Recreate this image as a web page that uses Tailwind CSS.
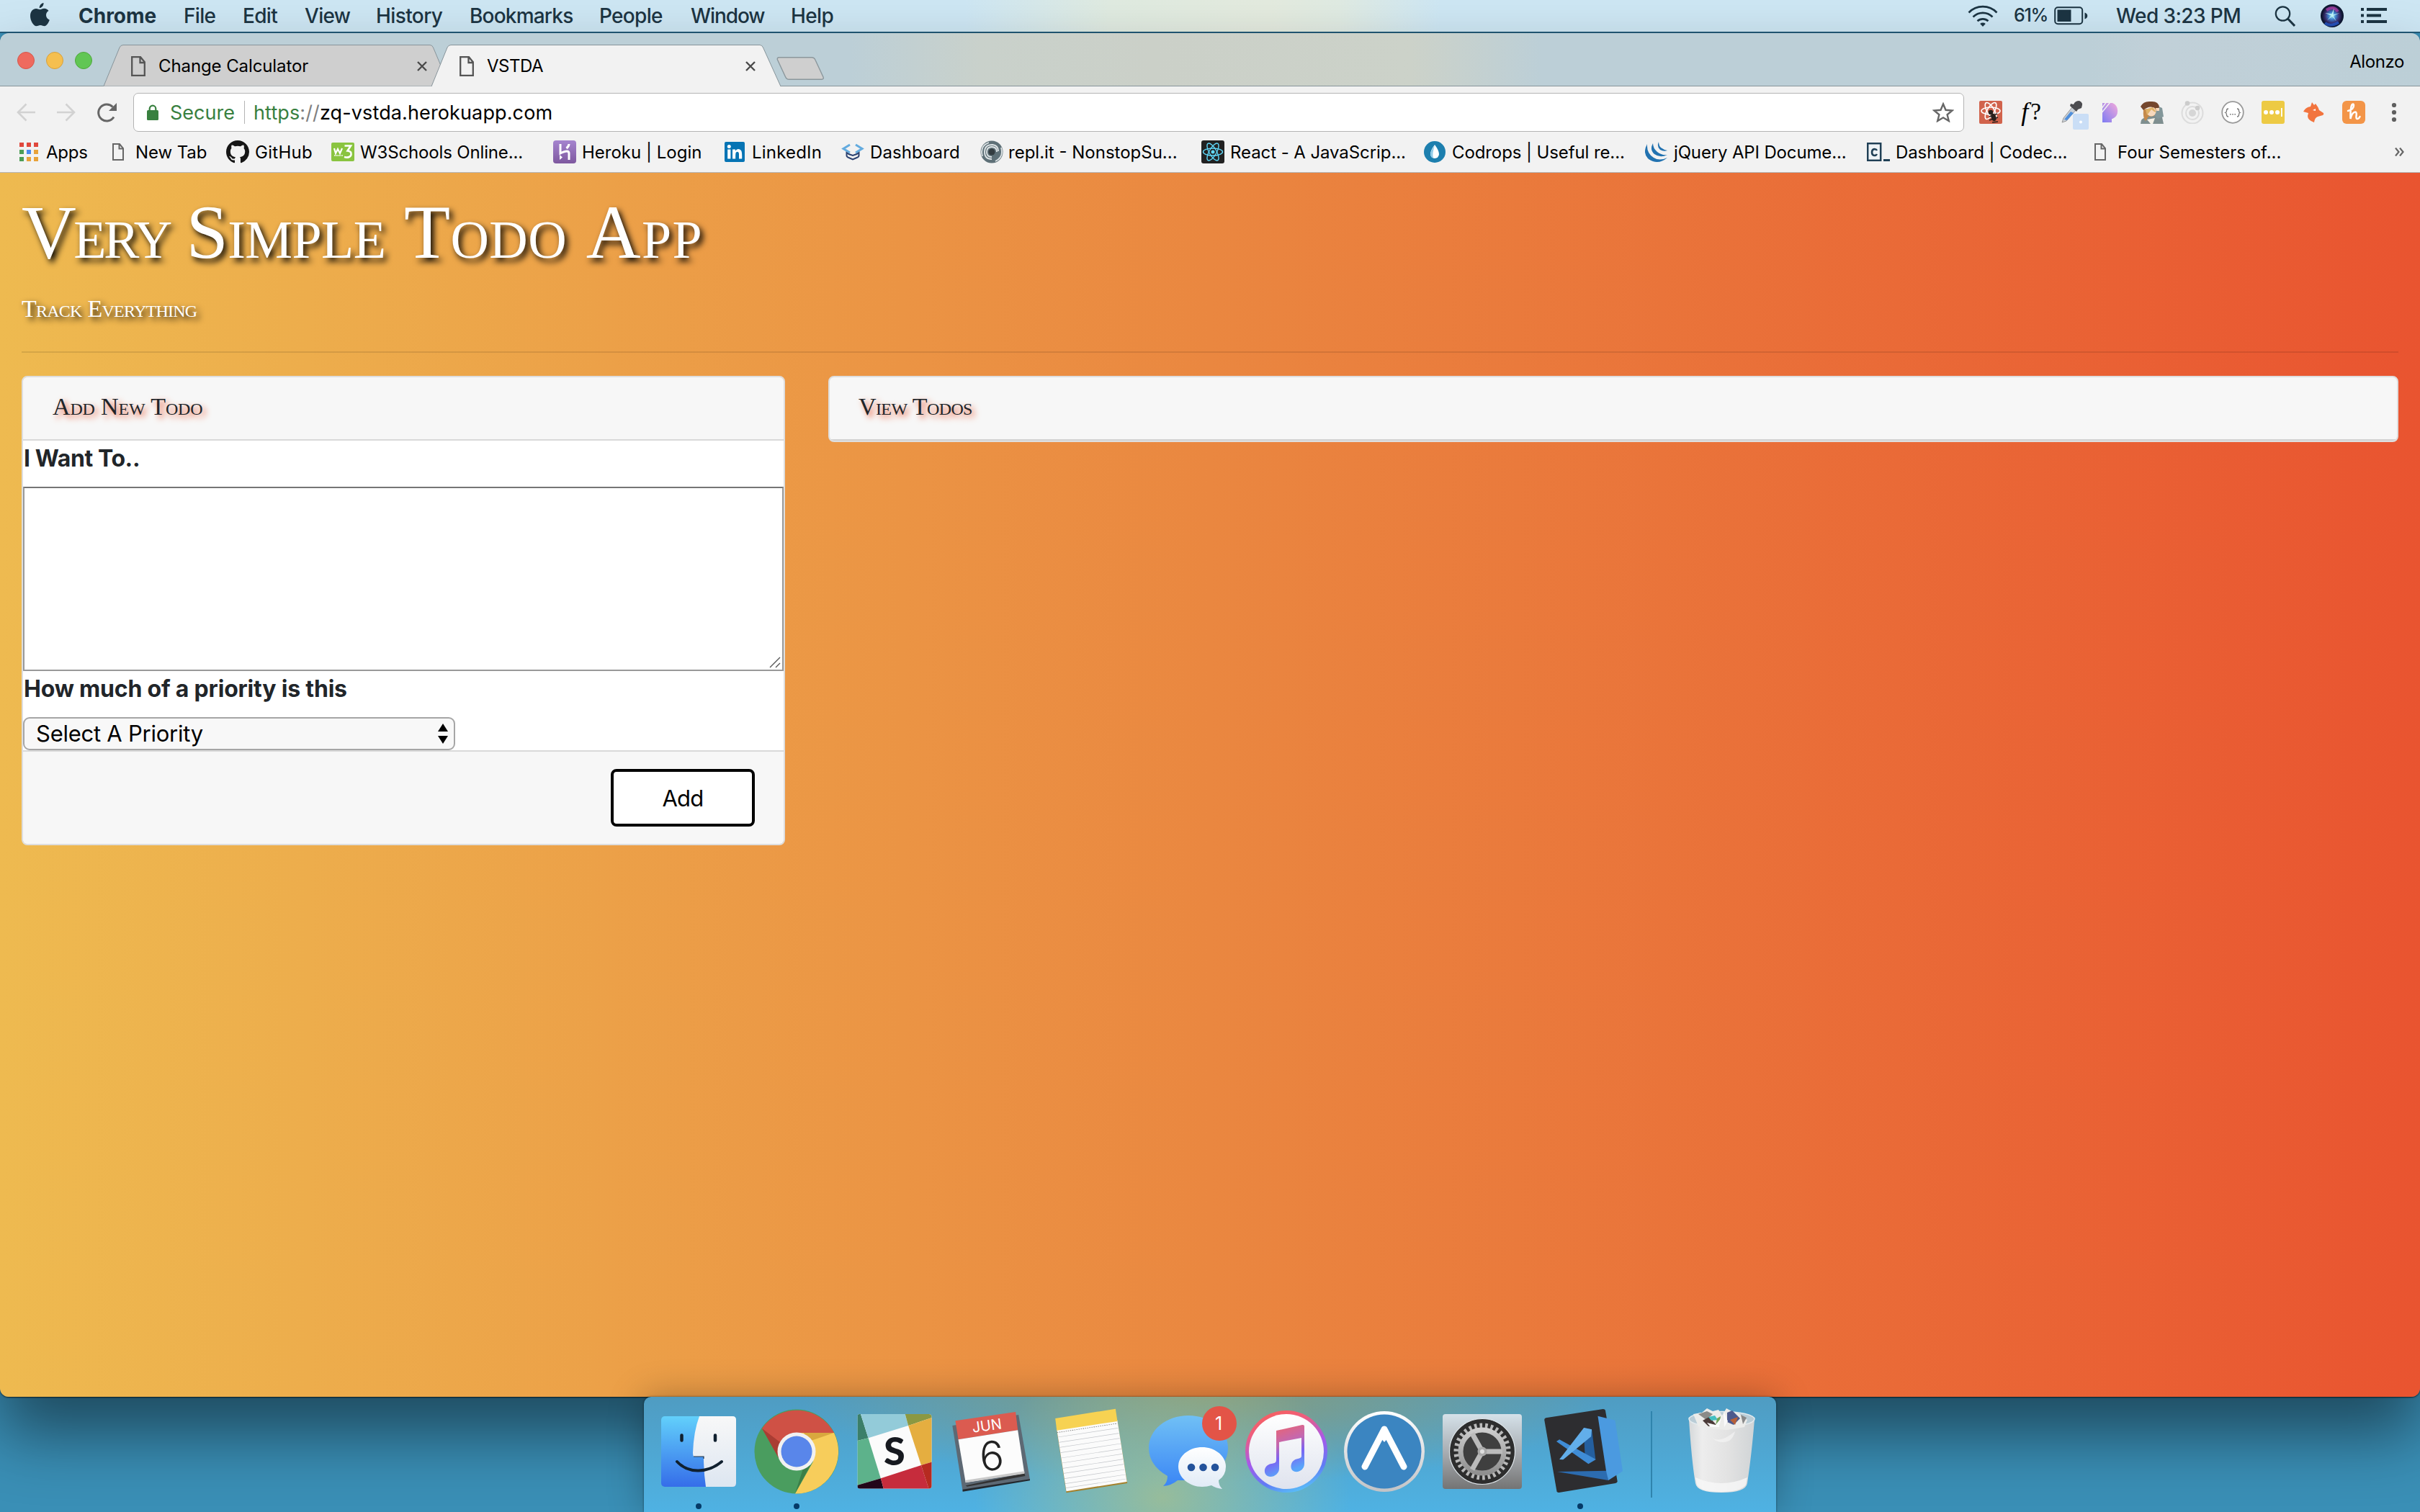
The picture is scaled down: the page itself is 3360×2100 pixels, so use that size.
<!DOCTYPE html>
<html lang="en">
<head>
<meta charset="utf-8">
<title>VSTDA</title>
<script src="https://cdn.jsdelivr.net/npm/@tailwindcss/browser@4"></script>
</head>
<body class="w-[3360px] h-[2100px] overflow-hidden bg-[#3a8fb6] font-['Inter',sans-serif] text-black relative whitespace-nowrap">

<!-- Menu bar -->
<header class="h-[46px] flex items-center border-b-2 border-[#225a78] bg-[linear-gradient(90deg,#cde6f3_0,#cde6f3_1340px,#dfeae0_1540px,#e3eade_1760px,#dfeae2_1860px,#cde6f3_2000px,#cde6f3_3360px)] text-[28px] font-medium text-[#1b3341]">
  <svg class="ml-[42px] mr-[40px] w-[27px] h-[33px] -mt-1 shrink-0" viewBox="0 0 27 33" fill="#1b3341"><path d="M18.500 0c.3 3.800-2.600 7-5.700 7.200C12.400 3.600 15.500.3 18.500 0zM13.600 9.300c1.500 0 3.200-1.500 5.800-1.500 2.600 0 4.900 1.300 6.100 3.300-5.300 3.100-4.300 10.400 1.300 12.700-1.500 4-4.100 8.400-7.100 8.400-2.200 0-2.900-1.300-5.600-1.300-2.700 0-3.600 1.300-5.600 1.300C4.600 32.200 0 24.600 0 18.200 0 11.600 4.100 8 8 8c2.500 0 4.300 1.300 5.600 1.300z"/></svg>
  <nav class="flex">
    <span class="w-[146px] font-bold">Chrome</span>
    <span class="w-[82px] tracking-[-0.7px]">File</span>
    <span class="w-[86px] tracking-[-0.7px]">Edit</span>
    <span class="w-[99px] tracking-[-0.7px]">View</span>
    <span class="w-[130px] tracking-[-0.6px]">History</span>
    <span class="w-[180px] tracking-[-0.8px]">Bookmarks</span>
    <span class="w-[127px] tracking-[-0.7px]">People</span>
    <span class="w-[139px] tracking-[-1.1px]">Window</span>
    <span class="tracking-[-0.6px]">Help</span>
  </nav>
  <div class="ml-auto flex items-center mr-[46px]">
    <svg class="w-[42px] h-[30px]" viewBox="0 0 42 30" fill="none" stroke="#1b3341" stroke-width="2.600"><path d="M1.500 10.500a27 27 0 0 1 39 0M7.500 16.500a19 19 0 0 1 27 0M13.500 22.300a11 11 0 0 1 15 0"/><path d="M21 30l-3.800-4a5.600 5.600 0 0 1 7.600 0z" fill="#1b3341" stroke="none"/></svg>
    <span class="ml-[22px] w-[56px] text-[25px] tracking-[-1.3px]">61%</span>
    <svg class="w-[47px] h-[26px]" viewBox="0 0 47 26"><rect x="1.200" y="1.200" width="38" height="23" rx="4" fill="none" stroke="#1b3341" stroke-width="2"/><rect x="4.500" y="4.500" width="19" height="16.500" fill="#1b3341"/><path d="M42.500 8.500c5 1 5 8 0 9z" fill="#1b3341"/></svg>
    <span class="ml-[39px] w-[220px] tracking-[-0.6px]">Wed 3:23 PM</span>
    <svg class="w-[29px] h-[29px]" viewBox="0 0 29 29" fill="none" stroke="#1b3341"><circle cx="11.500" cy="11" r="9.700" stroke-width="2.200"/><path d="M18.500 18l9.500 10" stroke-width="3"/></svg>
    <svg class="ml-[35px] w-[32px] h-[32px]" viewBox="0 0 32 32"><defs><radialGradient id="siri"><stop offset="0" stop-color="#aef4f2"/><stop offset=".35" stop-color="#3f83cf"/><stop offset=".7" stop-color="#38306f"/><stop offset="1" stop-color="#101533"/></radialGradient></defs><circle cx="16" cy="16" r="16" fill="#0c1630"/><circle cx="16" cy="16" r="14" fill="url(#siri)"/><path d="M8 8q10-7 16 2" stroke="#b83fae" stroke-width="4" fill="none" opacity=".7"/><path d="M6 26q8 6 19-1" stroke="#2456c8" stroke-width="4" fill="none" opacity=".8"/><path d="M6 12l9 3.500-6 7 7-6 6 7-4.500-7.500 9-4-9 2.500 1-9-3 8z" fill="#bdf3f5"/></svg>
    <svg class="ml-[24px] w-[36px] h-[22px]" viewBox="0 0 36 22" fill="#1b3341"><path d="M0 0h4v4H0zM8 0h28v4H8zM0 8.500h4v4H0zM8 8.500h20v4H8zM0 17h4v4H0zM8 17h28v4H8z"/></svg>
  </div>
</header>

<!-- Browser window -->
<main class="h-[1894px] rounded-[12px] shadow-[0_1px_2px_rgba(0,0,0,0.7),0_52px_90px_rgba(0,0,0,0.48)] flex flex-col">
  <div class="h-[74px] shrink-0 relative flex rounded-t-[12px] border-b border-[#87949a] bg-[linear-gradient(90deg,#bccfd7_0,#bccfd7_1180px,#c9d1cb_1360px,#cbd0c8_1600px,#ccd2c9_1960px,#bccfd7_2140px,#bccfd7_2900px,#c1d0d8_3000px,#bccfd7_3360px)]">
    <div class="w-[144px] flex gap-4 pl-6 pt-[26px] shrink-0">
      <i class="size-6 rounded-full bg-[#ee6a5e] border border-[#d5574b]"></i>
      <i class="size-6 rounded-full bg-[#f5bf4f] border border-[#d6a03d]"></i>
      <i class="size-6 rounded-full bg-[#61c654] border border-[#4fa83b]"></i>
    </div>
    <div class="relative w-[469px] h-[74px] shrink-0 flex text-[24px]">
      <svg class="absolute inset-0" width="485" height="74" viewBox="0 0 485 74"><path d="M0 73.500L22 20q1.500-3.500 5-3.500H453q3 0 4.500 3.500L480 73.500" fill="#cfcfcf" stroke="#87949a"/></svg>
      <svg class="relative ml-[38px] mt-8 w-5 h-7" viewBox="0 0 20 28" fill="none" stroke="#555" stroke-width="2.300"><path d="M1.200 1.200H13l5.800 7v18.600H1.200zM12.500 1.200V9h6.300"/></svg>
      <span class="relative ml-[18px] mt-[30px] leading-[31px] w-[359px] tracking-[-0.1px]">Change Calculator</span>
      <svg class="relative mt-[39px] w-[14px] h-[14px]" viewBox="0 0 14 14" stroke="#4a4a4a" stroke-width="2.400"><path d="M1 1l12 12M13 1L1 13"/></svg>
    </div>
    <div class="relative -ml-[14px] w-[485px] h-[74px] shrink-0 flex text-[24px]">
      <svg class="absolute inset-0" width="485" height="74" viewBox="0 0 485 74"><path d="M0 74L22 20q1.500-3.500 5-3.500H456q3 0 4.500 3.500L485 74" fill="#f2f2f2" stroke="#87949a"/></svg>
      <svg class="relative ml-[39px] mt-8 w-5 h-7" viewBox="0 0 20 28" fill="none" stroke="#555" stroke-width="2.300"><path d="M1.200 1.200H13l5.800 7v18.600H1.200zM12.500 1.200V9h6.300"/></svg>
      <span class="relative ml-[18px] mt-[30px] leading-[31px] w-[359px] tracking-[-0.5px]">VSTDA</span>
      <svg class="relative mt-[39px] w-[14px] h-[14px]" viewBox="0 0 14 14" stroke="#4a4a4a" stroke-width="2.400"><path d="M1 1l12 12M13 1L1 13"/></svg>
    </div>
    <svg class="relative -ml-[6px] mt-[33px] w-[66px] h-[33px]" viewBox="0 0 66 33"><path d="M3.500.8H49q3.500 0 5 3.500L65 28q1 3.200-2 3.200H17.500q-3.500 0-5-3.500L1.300 3.500Q1 .8 3.500.8z" fill="#cfcfcf" stroke="#8b979c" stroke-width="1.400"/></svg>
    <span class="ml-auto mr-[22px] mt-6 leading-[31px] text-[24px] tracking-[-0.4px]">Alonzo</span>
  </div>

  <div class="h-[120px] shrink-0 bg-[#f2f2f2]">
    <div class="pt-[9px] h-[63px] flex items-center">
      <svg class="ml-[23px] w-[26px] h-[26px]" viewBox="0 0 26 26" fill="none" stroke="#d2d2d2" stroke-width="2.600"><path d="M26 13H2M13.500 1.500L2 13l11.500 11.500"/></svg>
      <svg class="ml-[30px] w-[26px] h-[26px]" viewBox="0 0 26 26" fill="none" stroke="#d2d2d2" stroke-width="2.600"><path d="M0 13h24M12.500 1.500L24 13 12.500 24.500"/></svg>
      <svg class="ml-[29px] w-[29px] h-[27px]" viewBox="0 0 29 27"><path d="M24 19.500A11.500 11.500 0 1 1 22.500 5.500" fill="none" stroke="#666" stroke-width="3"/><path d="M28 0v11H17z" fill="#666"/></svg>
      <div class="ml-[22px] w-[2542px] h-[54px] rounded-[7px] border border-[#b4b4b4] bg-white flex items-center text-[27px]">
        <svg class="ml-[18px] w-4 h-[22px]" viewBox="0 0 16 22"><rect y="8" width="16" height="14" rx="1.500" fill="#38803f"/><path d="M3.700 9V6a4.300 4.300 0 0 1 8.600 0v3" fill="none" stroke="#38803f" stroke-width="2.200"/></svg>
        <span class="ml-4 w-[103px] pt-[2px] text-[#38803f]">Secure</span>
        <i class="w-px h-8 bg-[#b4b4b4]"></i>
        <span class="ml-[12px] pt-[2px] tracking-[0.12px]"><span class="text-[#38803f]">https</span><span class="text-[#808080]">://</span>zq-vstda.herokuapp.com</span>
        <svg class="ml-auto mr-[13px] w-[30px] h-[28px]" viewBox="0 0 30 28"><path d="M15 2.500l3.500 8.300 9 .7-6.900 5.800 2.200 8.700-7.800-4.700L7.200 26l2.200-8.700-6.900-5.800 9-.7z" fill="none" stroke="#666" stroke-width="2.400"/></svg>
      </div>
      <div class="ml-[21px] flex items-center gap-6">
        <svg class="size-8" viewBox="0 0 32 32"><rect width="32" height="32" rx="2" fill="#d1634c"/><g fill="none" stroke="#fff" stroke-width="1.600"><ellipse cx="16" cy="14" rx="13" ry="5"/><ellipse cx="16" cy="14" rx="13" ry="5" transform="rotate(60 16 14)"/><ellipse cx="16" cy="14" rx="13" ry="5" transform="rotate(120 16 14)"/></g><g fill="#2b211d" stroke="#2b211d" stroke-width="1.500"><circle cx="16" cy="16" r="2.500"/><ellipse cx="20" cy="23" rx="2.600" ry="4.600" transform="rotate(-20 20 23)"/><path d="M14 22l11-4M14 27l12-4M18 30l8-1" fill="none"/></g></svg>
        <span class="size-8 font-['Liberation_Serif',serif] italic text-[36px] leading-[30px] flex justify-center">f<span class="not-italic text-[33px] pl-[3px]">?</span></span>
        <svg class="size-8 overflow-visible" viewBox="0 0 32 32"><path d="M3 30l2-6L17 9l5 4L9 28z" fill="#c9cfd6" stroke="#999" stroke-width="1"/><path d="M6 26L15 15l4 2-9 10z" fill="#4f8fdc"/><path d="M14 7l9 8 2-3 5-2q3-8-3-10-6 0-8 5l-4-1z" fill="#4c4c50"/><rect x="18" y="18" width="22" height="22" rx="2" fill="#cadef6"/><circle cx="29" cy="29.500" r="2" fill="#fff"/></svg>
        <svg class="size-8" viewBox="0 0 32 32"><defs><linearGradient id="pp" x1="0" y1="1" x2="1" y2="0"><stop stop-color="#7d7bf2"/><stop offset="1" stop-color="#f3aadb"/></linearGradient></defs><path d="M3 3h14a12 12 0 0 1 0 22h-1v5H3z" fill="url(#pp)"/><path d="M2.500 10L8 2.500M2.500 16L13.500 2.500" stroke="#f2f2f2" stroke-width="1.400"/></svg>
        <svg class="size-8" viewBox="0 0 32 32"><path d="M0 32q0-8 9-10l12-4 9 5 2 9z" fill="#7f8f90"/><path d="M23 7l7 3 2 12-8 3-5-5z" fill="#83979a"/><path d="M4 12q-1 12 3 16l4-6 8-1 4-12z" fill="#c58a4b"/><circle cx="15" cy="15" r="6.500" fill="#f7d9bd"/><path d="M0 8Q4 0 14 1q11-1 12 8l-4 2Q13 5 4 13z" fill="#75472d"/><path d="M7 12l10-3 5 7-3-1-4-3-6 8z" fill="#deb167"/><path d="M9 26l5 6h3l3-8z" fill="#f5f1e7"/><path d="M21 10h5v4h-4z" fill="#f7d9bd"/></svg>
        <svg class="size-8" viewBox="0 0 32 32"><g fill="none" stroke="#dcdcdc" stroke-width="2"><circle cx="16" cy="17" r="14.500"/><circle cx="16" cy="17" r="9"/></g><circle cx="16" cy="17" r="5" fill="#d6d6d6"/><circle cx="9" cy="3.500" r="3.300" fill="#ccc"/><circle cx="23" cy="10" r="3.300" fill="#ccc"/></svg>
        <svg class="size-8" viewBox="0 0 32 32"><circle cx="16" cy="16" r="14.800" fill="#fff" stroke="#999" stroke-width="1.800"/><path d="M10 11q-2.500 0-2.500 2.500T6 16.500q1.500.5 1.500 3T10 22M22 11q2.500 0 2.500 2.500t1.500 3q-1.500.5-1.500 3T22 22" fill="none" stroke="#777" stroke-width="1.300"/><path d="M12 18h1.600v1.600H12zM15.200 18h1.600v1.600h-1.600zM18.400 18H20v1.600h-1.600z" fill="#777"/></svg>
        <svg class="size-8" viewBox="0 0 32 32"><rect width="32" height="32" rx="3" fill="#edca44"/><g fill="#fff"><circle cx="6" cy="16" r="3"/><circle cx="14" cy="16" r="3"/><circle cx="22" cy="16" r="3"/><path d="M27 10h1.800v12H27z"/></g></svg>
        <svg class="size-8" viewBox="0 0 32 32"><path d="M12 8l2-6 3 4 2-2q4 5 5 9l6 4q1 2-1 3l-7 2q-4 1-5 8-9-3-9-9l1-4-7-2q3-6 10-7z" fill="#f2743e"/><path d="M15 13l4-2v3z" fill="#fff"/></svg>
        <svg class="size-8" viewBox="0 0 32 32"><rect width="32" height="32" rx="6" fill="#f39548"/><path d="M8 14q8-2 8-7.500 0-3-2-1.500-3 3-2.500 20 2-9 6.500-9.500 2.500 0 1.500 6-.5 4 2 3.500 2-.5 3-3" fill="none" stroke="#fff" stroke-width="2.500" stroke-linecap="round"/></svg>
        <svg class="size-8" viewBox="0 0 32 32" fill="#5f5f5f"><circle cx="16" cy="6" r="3.100"/><circle cx="16" cy="16" r="3.100"/><circle cx="16" cy="26" r="3.100"/></svg>
      </div>
    </div>
    <div class="h-[57px] border-b border-[#b6b6b6] flex items-center text-[24px] pl-[27px]">
      <div class="flex items-center w-[129px]"><svg class="w-[26px] h-[26px] mr-[11px]" viewBox="0 0 26 26"><path d="M0 0h6v6H0zM10 0h6v6h-6zM20 0h6v6h-6z" fill="#e0483d"/><path d="M0 10h6v6H0zM0 20h6v6H0z" fill="#4d9d56"/><path d="M10 10h6v6h-6z" fill="#4a8af0"/><path d="M20 10h6v6h-6zM10 20h6v6h-6zM20 20h6v6h-6z" fill="#e8a23a"/></svg><span class="pt-[2px] tracking-[-0.2px]">Apps</span></div>
      <div class="flex items-center w-[158px]"><svg class="w-4 h-6 mr-4" viewBox="0 0 16 24" fill="none" stroke="#666" stroke-width="2"><path d="M1 1h9l5 6v16H1zM9.500 1v6.500H15"/></svg><span class="pt-[2px] tracking-[-0.1px]">New Tab</span></div>
      <div class="flex items-center w-[146px]"><svg class="size-8 mr-2" viewBox="0 0 16 16" fill="#161616"><path d="M8 0C3.580 0 0 3.580 0 8c0 3.540 2.290 6.530 5.470 7.590.4.070.55-.17.55-.38 0-.19-.01-.82-.01-1.490-2.010.37-2.530-.49-2.690-.94-.09-.23-.48-.94-.82-1.130-.28-.15-.68-.52-.01-.53.63-.01 1.080.58 1.230.82.72 1.210 1.870.87 2.330.66.07-.52.28-.87.51-1.070-1.780-.2-3.640-.89-3.640-3.950 0-.87.31-1.590.82-2.150-.08-.2-.36-1.020.08-2.120 0 0 .67-.21 2.200.82A7.600 7.600 0 0 1 8 3.870c.68 0 1.360.09 2 .27 1.530-1.040 2.200-.82 2.200-.82.44 1.100.16 1.920.08 2.120.51.56.82 1.270.82 2.150 0 3.070-1.870 3.750-3.650 3.950.29.25.54.73.54 1.480 0 1.070-.01 1.930-.01 2.200 0 .21.15.46.55.38A8 8 0 0 0 16 8c0-4.420-3.580-8-8-8z"/></svg><span class="pt-[2px] tracking-[0.3px]">GitHub</span></div>
      <div class="flex items-center w-[309px]"><svg class="w-8 h-[26px] mr-2" viewBox="0 0 32 26"><rect width="32" height="26" rx="2" fill="#8ac440"/><path d="M4 8l2 7 3-6 3 6 3-7" fill="none" stroke="#fff" stroke-width="2.200"/><path d="M18.500 4.500h8.500l-4.500 7q6 .5 5 5.500-2 5-9.500 3" fill="none" stroke="#fff" stroke-width="2.600"/><path d="M4 18h12" stroke="#fff" stroke-width="1.500" stroke-dasharray="1.500 .7"/></svg><span class="pt-[2px] tracking-[-0.15px]">W3Schools Online...</span></div>
      <div class="flex items-center w-[237px]"><svg class="size-8 mr-2 -ml-px" viewBox="0 0 32 32"><defs><linearGradient id="hk" x2="0" y2="1"><stop stop-color="#a584cf"/><stop offset="1" stop-color="#7e589f"/></linearGradient></defs><rect width="32" height="32" rx="4" fill="url(#hk)"/><path d="M10 5v13q12-6 12 0v9M22 5q0 3-3.500 6" fill="none" stroke="#fff" stroke-width="3"/><path d="M9 20v7l4-3.500z" fill="#fff"/></svg><span class="pt-[2px]">Heroku | Login</span></div>
      <div class="flex items-center w-[162px]"><svg class="size-7 mr-[10px]" viewBox="0 0 28 28"><rect width="28" height="28" rx="2" fill="#0674b4"/><g fill="#fff"><circle cx="6.300" cy="6.500" r="2.500"/><path d="M4.200 10.500h4.200v13H4.200zM11 10.500h4v2q4-4.500 8-.5 1.500 2 1.200 11.500H20v-7q-.5-4-4-2-1 1-.8 9H11z"/></g></svg><span class="pt-[2px] tracking-[0.2px]">LinkedIn</span></div>
      <div class="flex items-center w-[193px]"><svg class="size-8 mr-2" viewBox="0 0 32 32" fill="none" stroke-width="3"><path d="M12 6L3 11.500l9 5.500M20 6l9 5.500-9 5.500" stroke="#63abdf"/><path d="M7.500 17v4q0 2 3 3l5.500 2.500 5.500-2.500q3-1 3-3v-4l-3 2-5.500 2-5.500-2z" stroke="#2b4170" stroke-width="2"/></svg><span class="pt-[2px] tracking-[0.1px]">Dashboard</span></div>
      <div class="flex items-center w-[307px]"><svg class="size-8 mr-[7px]" viewBox="0 0 32 32"><circle cx="16" cy="16" r="15.500" fill="#5e7077"/><g fill="none" stroke="#dfe5e7" stroke-width="1.800"><path d="M16 26Q6 26 6 16T17 6q8 1 8 9M3 22Q-1 8 12 3M29 10q4 13-8 19M16 23q-7 0-7-7t7-7q7 0 7 7"/></g><circle cx="16" cy="16" r="4.500" fill="#333c40"/></svg><span class="pt-[2px]">repl.it - NonstopSu...</span></div>
      <div class="flex items-center w-[309px]"><svg class="size-8 mr-2" viewBox="0 0 32 32"><rect width="32" height="32" rx="3" fill="#222"/><g fill="none" stroke="#61dafb" stroke-width="1.400"><ellipse cx="16" cy="16" rx="13.500" ry="5"/><ellipse cx="16" cy="16" rx="13.500" ry="5" transform="rotate(60 16 16)"/><ellipse cx="16" cy="16" rx="13.500" ry="5" transform="rotate(120 16 16)"/></g><circle cx="16" cy="16" r="2.500" fill="#61dafb"/></svg><span class="pt-[2px] tracking-[-0.08px]">React - A JavaScrip...</span></div>
      <div class="flex items-center w-[307px]"><svg class="size-[30px] mr-[9px]" viewBox="0 0 30 30"><circle cx="15" cy="15" r="15" fill="#1d7fae"/><path d="M15 5q6 8 6 13a6 6 0 0 1-12 0q0-5 6-13z" fill="#fff"/><path d="M15 6q-6 8-6 12a6 6 0 0 0 4 5.500q-2-6 2-17.500z" fill="#8fcbe8"/></svg><span class="pt-[2px] tracking-[-0.1px]">Codrops | Useful re...</span></div>
      <div class="flex items-center w-[308px]"><svg class="size-8 mr-2" viewBox="0 0 32 32" fill="#2272b0"><path d="M3 5Q-4 18 5 26q13 9 26-2-11 5-19 0Q2 18 3 5zM11 4q-5 9 2 15 8 6 18 1-8 1-14-4Q11 11 11 4zM19 2q-3 7 2 11 5 3 10 1-5-1-9-4Q19 7 19 2z"/></svg><span class="pt-[2px] tracking-[-0.15px]">jQuery API Docume...</span></div>
      <div class="flex items-center w-[316px]"><svg class="w-8 h-[26px] mr-2" viewBox="0 0 32 26"><rect x="1.200" y="1.200" width="18" height="23.600" fill="#eef3f6" stroke="#204056" stroke-width="2.500"/><path d="M14 11q-1-2-3.500-2-3.500.5-3.500 4.500t3.500 4.500q2.500 0 3.500-2" fill="none" stroke="#204056" stroke-width="2.600"/><path d="M23 23h9v3h-9z" fill="#204056"/></svg><span class="pt-[2px] tracking-[-0.1px]">Dashboard | Codec...</span></div>
      <div class="flex items-center"><svg class="w-4 h-6 mr-4" viewBox="0 0 16 24" fill="none" stroke="#666" stroke-width="2"><path d="M1 1h9l5 6v16H1zM9.500 1v6.500H15"/></svg><span class="pt-[2px]">Four Semesters of...</span></div>
      <svg class="ml-auto mr-[22px] w-[13px] h-3" viewBox="0 0 13 12" fill="none" stroke="#666" stroke-width="2.200"><path d="M1 .5L5.500 6 1 11.500M7 .5L11.500 6 7 11.500"/></svg>
    </div>
  </div>

  <!-- Page -->
  <section class="grow rounded-b-[12px] bg-[linear-gradient(90deg,#eeba50,#ea8740_50%,#e95430)] px-[30px] pt-[25px]">
    <h1 class="h-[115px] leading-[115px] text-[105px] font-['Liberation_Serif',serif] [font-variant:small-caps] text-white [text-shadow:4px_5px_8px_#000]"><span class="tracking-[-3.500px]">Very </span><span class="tracking-[-0.6px]">Simple </span><span class="tracking-[0.4px]">Todo </span><span class="tracking-[1.400px]">App</span></h1>
    <p class="mt-6 h-[50px] leading-[50px] text-[34px] tracking-[-0.75px] font-['Liberation_Serif',serif] [font-variant:small-caps] text-white [text-shadow:4px_4px_8px_#000]">Track Everything</p>
    <hr class="mt-[34px] border-t-2 border-black/10">
    <div class="mt-8 flex items-start gap-[60px]">
      <div class="w-[1060px] h-[652px] rounded-lg border-2 border-[#dedede] bg-white bg-clip-padding overflow-hidden">
        <h2 class="h-[88px] pb-[5px] pl-[41px] flex items-center bg-[#f7f7f7] border-b-2 border-[#d9d9d9] text-[34px] tracking-[-0.15px] font-['Liberation_Serif',serif] [font-variant:small-caps] text-[#212529] [text-shadow:4px_4px_8px_#e95631]">Add New Todo</h2>
        <label class="block pl-px leading-[50px] mb-[14px] text-[32px] font-bold tracking-[-0.4px] text-[#212529]">I Want To..</label>
        <div class="h-[256px] border-2 border-[#999] border-t-[#757575] relative">
          <svg class="absolute right-[2px] bottom-[2px] size-4" viewBox="0 0 16 16" stroke="#555" stroke-width="1.400"><path d="M1 15L15 1M9 15l6-6"/></svg>
        </div>
        <label class="block pl-px leading-[50px] mb-[14px] text-[32px] font-bold tracking-[-0.2px] text-[#212529]">How much of a priority is this</label>
        <div class="w-[600px] h-[46px] rounded-[9px] border-2 border-[#a6a6a6] bg-[#f8f8f8] flex items-center pl-[16px] pr-2 text-[31px] tracking-[-0.25px]">Select A Priority
          <svg class="ml-auto w-[14px] h-7" viewBox="0 0 14 28"><path d="M7 0l7 11H0zM7 28L0 17h14z"/></svg>
        </div>
        <div class="h-[130px] border-t-2 border-[#d9d9d9] bg-[#f7f7f7] flex justify-end pt-6 pr-10">
          <button class="w-[200px] h-[80px] rounded-lg border-4 border-black bg-white pt-[2px] text-[31px] tracking-[-0.8px]">Add</button>
        </div>
      </div>
      <div class="w-[2180px] h-[92px] rounded-lg border-2 border-[#dedede] bg-[#f7f7f7] overflow-hidden">
        <h2 class="h-[88px] pb-[5px] pl-10 flex items-center border-b-2 border-[#d3d3d3] text-[34px] tracking-[-0.6px] font-['Liberation_Serif',serif] [font-variant:small-caps] text-[#212529] [text-shadow:4px_4px_8px_#e95631]">View Todos</h2>
      </div>
    </div>
  </section>
</main>

<!-- Dock -->
<footer class="absolute left-[894px] top-[1940px] w-[1572px] h-[160px] pl-2 flex rounded-t-[10px] shadow-[0_0_50px_rgba(0,0,0,0.28),0_0_3px_rgba(0,0,0,0.5)] bg-[radial-gradient(ellipse_260px_200px_at_720px_140px,#9cbd96ee,#9cbd9600),radial-gradient(ellipse_560px_120px_at_780px_0px,#8f9d74e0,#8f9d7400),linear-gradient(180deg,#4f9cc2,#4fb2e3)]">
  <svg class="w-[136px] h-[160px]" viewBox="0 0 136 160"><defs><linearGradient id="f1" x2="0" y2="1"><stop stop-color="#62d0fb"/><stop offset="1" stop-color="#356de9"/></linearGradient><linearGradient id="f2" x2="0" y2="1"><stop stop-color="#f8f8f8"/><stop offset="1" stop-color="#dde6f1"/></linearGradient></defs><rect x="16" y="27" width="104" height="98" rx="5" fill="url(#f1)"/><path d="M69 27h46q5 0 5 5v88q0 5-5 5H78q-3-20-3-42H61q-1-2-1-5 1-30 9-51z" fill="url(#f2)"/><path d="M61 83h14v3" stroke="#234" stroke-width="1.200" fill="none"/><g stroke="#10202f" stroke-linecap="round" fill="none"><path d="M44.500 53.500v7M91 53.500v7" stroke-width="4.500"/><path d="M38 90q12 13 30 12.500T100 90" stroke-width="4"/></g><circle cx="68" cy="152" r="4" fill="#053a68"/></svg>
  <svg class="w-[136px] h-[160px]" viewBox="0 0 136 160"><circle cx="68" cy="76" r="58.500" fill="#4a9d5f"/><path d="M20 44A58.500 58.500 0 0 1 120 50H68L44 84z" fill="#cf5145"/><path d="M120 50A58.500 58.500 0 0 1 66 134.500L91 90 68 50z" fill="#f7cd5b"/><path d="M20 44l23 41 6-19z" fill="#a93d33"/><path d="M78 50h42l-35 12z" fill="#d9a83e"/><path d="M66 134l25-46-14 12z" fill="#3c7f47"/><circle cx="68" cy="76" r="26.500" fill="#f1f1f1"/><circle cx="68" cy="76" r="21.500" fill="#5986ea"/><circle cx="68" cy="152" r="4" fill="#053a68"/></svg>
  <svg class="w-[136px] h-[160px]" viewBox="0 0 136 160"><clipPath id="sl"><rect x="16" y="24" width="103.500" height="103.500" rx="4"/></clipPath><g clip-path="url(#sl)"><g transform="translate(-294 -20) scale(.5102 .3333)"><path d="M609 130h205v320H609z" fill="#fbfbfb"/><path d="M609 130h8l21 102-29 11z" fill="#3b7f69"/><path d="M617 130h121l9 50-109 52z" fill="#93cbd9"/><path d="M738 130h74v17l-65 33z" fill="#8b9841"/><path d="M747 180l65-33v184l-30 14z" fill="#e5ae40"/><path d="M609 243l29-11 34 168-63 28z" fill="#5db28b"/><path d="M609 428l63-28 8 45h-71z" fill="#230619"/><path d="M672 400l110-55 21 100H680z" fill="#c62c3c"/><path d="M782 345l30-14v114h-9z" fill="#b62a20"/></g></g><text x="68" y="95" text-anchor="middle" font-family="Lato" font-weight="900" font-size="54" fill="#16191f">S</text></svg>
  <svg class="w-[136px] h-[160px]" viewBox="0 0 136 160"><g transform="translate(-430 -20) scale(.5102 .3333)"><path d="M867 180l180-45 31 270-183 48z" fill="#5d6974"/><path d="M895 446l183-43v6l-183 46z" fill="#23282d"/><path d="M903 430l160-52 2 12-158 44z" fill="#333"/><path d="M875 160l164-37 6 76-162 39z" fill="#db5b50"/><path d="M883 238l162-39 18 180-160 38z" fill="#fcfcfc"/><path d="M902 408l161-38v10l-160 38z" fill="#c9c9c9"/></g><text x="61" y="47" transform="rotate(-8 61 46)" text-anchor="middle" font-family="Inter" font-size="20" fill="#fff">JUN</text><text x="67" y="102" text-anchor="middle" font-family="Inter" font-weight="300" font-size="56" fill="#222" transform="rotate(-4 68 85)">6</text></svg>
  <svg class="w-[136px] h-[160px]" viewBox="0 0 136 160"><g transform="translate(-566 -20) scale(.5102 .3333)"><path d="M1151 200l165-38 27 258-166 40z" fill="#a5812c"/><path d="M1151 196l165-38 26 256-165 40z" fill="#fbfbfb"/><path d="M1147 150l164-40 5 52-165 38z" fill="#f7d252"/><path d="M1152 209l164-38" stroke="#777" stroke-width="2.500" stroke-dasharray="3 3"/><g stroke="#c3c6ca" stroke-width="2"><path d="M1154 228l164-38M1156 250l164-38M1158 271l164-38M1161 293l164-38M1163 315l164-38M1165 336l164-38M1168 358l164-38M1170 379l164-38M1172 401l164-38M1174 422l164-38M1176 440l164-38"/></g></g></svg>
  <svg class="w-[136px] h-[160px] overflow-visible" viewBox="0 0 136 160"><defs><linearGradient id="ms" x2="0" y2="1"><stop stop-color="#70c0f5"/><stop offset="1" stop-color="#3b86f5"/></linearGradient><linearGradient id="ms2" x2="0" y2="1"><stop stop-color="#fff"/><stop offset="1" stop-color="#dfeaf6"/></linearGradient></defs><path d="M68 26c31 0 55 20 55 45s-24 45-55 45l-15 0q-8 7-20 8 6-5 6-14Q13 95 13 71c0-25 24-45 55-45z" fill="url(#ms)"/><path d="M87 70c18 0 33 12 33 27q0 12-10 19 0 7 5 12-9-1-15-5-6 2-13 2c-18 0-33-13-33-28s15-27 33-27z" fill="url(#ms2)"/><g fill="#24539b"><circle cx="72" cy="98" r="5.300"/><circle cx="88.500" cy="98" r="5.300"/><circle cx="105" cy="98" r="5.300"/></g><circle cx="111" cy="37" r="24" fill="#e35447"/><text x="110" y="46" text-anchor="middle" font-family="Inter" font-size="25" fill="#fff">1</text></svg>
  <svg class="w-[136px] h-[160px]" viewBox="0 0 136 160"><defs><linearGradient id="it" x1=".3" y1="0" x2=".65" y2="1"><stop stop-color="#f6605e"/><stop offset=".2" stop-color="#ee5e7e"/><stop offset=".5" stop-color="#a858ea"/><stop offset=".8" stop-color="#5f7cf5"/><stop offset="1" stop-color="#58c3f8"/></linearGradient><linearGradient id="it2" x2="0" y2="1"><stop stop-color="#fff"/><stop offset="1" stop-color="#dfe3ee"/></linearGradient><linearGradient id="it3" x2=".3" y2="1"><stop stop-color="#f5635f"/><stop offset=".45" stop-color="#c468b0"/><stop offset=".7" stop-color="#7c62f2"/><stop offset="1" stop-color="#59a5fa"/></linearGradient></defs><circle cx="68" cy="76" r="57" fill="url(#it)"/><circle cx="68" cy="76" r="52" fill="url(#it2)"/><path d="M54 47l36-8q3-.5 3 2v52c0 7-6 12-13 11-8-1-8-16 4-18 3-1 5-1 5-4V57l-31 6v37c0 6-6 11-12 11-11 0-11-16 1-18 5-1 7-1 7-6V50q0-2.500 0-3z" fill="url(#it3)"/></svg>
  <svg class="w-[136px] h-[160px]" viewBox="0 0 136 160"><defs><linearGradient id="as" x2="0" y2="1"><stop stop-color="#fff"/><stop offset="1" stop-color="#c2c3c6"/></linearGradient></defs><circle cx="68" cy="76" r="56" fill="url(#as)"/><circle cx="68" cy="76" r="51.500" fill="#3b85c1"/><path d="M41 97l27-52 27 52" fill="none" stroke="#fff" stroke-width="9" stroke-linecap="round" stroke-linejoin="round"/><path d="M63 46l5-1 5 1 3 8-8 9-8-9z" fill="#fff"/></svg>
  <svg class="w-[136px] h-[160px]" viewBox="0 0 136 160"><defs><linearGradient id="pf" x2="0" y2="1"><stop stop-color="#d5e1e9"/><stop offset=".5" stop-color="#a9aeb3"/><stop offset="1" stop-color="#747474"/></linearGradient><linearGradient id="pg" x2="0" y2="1"><stop stop-color="#ccc"/><stop offset="1" stop-color="#8f8f8f"/></linearGradient></defs><rect x="13" y="24" width="110" height="104" rx="4" fill="url(#pf)"/><circle cx="68" cy="76" r="45.500" fill="#2d2d2d" stroke="#dfe6ea" stroke-width="1.200"/><circle cx="68" cy="76" r="36" fill="none" stroke="#b9b9b9" stroke-width="7" stroke-dasharray="3.600 3.939"/><circle cx="68" cy="76" r="30" fill="#3f3f3f" stroke="url(#pg)" stroke-width="7"/><g stroke="#bbb" stroke-width="7"><path d="M68 76h28M68 76L54 51M68 76l-14 25"/></g><circle cx="68" cy="76" r="6.500" fill="#a8a8a8"/><circle cx="68" cy="76" r="3" fill="#ddd"/></svg>
  <svg class="w-[136px] h-[160px]" viewBox="0 0 136 160"><g transform="translate(-466 -20) scale(.5229 .3333)"><path d="M930 148l152-37q5 0 6 5l32 296q0 6-5 8l-150 39q-5 1-6-5L926 156q0-6 4-8z" fill="#2d2d30"/><path d="M960 372l132-4 4 40z" fill="#2c6cb0"/><path d="M1068 140l46 18 20 212-38 38-6-40z" fill="#4b9ae0"/><path d="M1031 189l21 7 10 124-28-6-2-70z" fill="#245f9f"/><path d="M958 246l8-8 97 83-20 19z" fill="#3f8cd6"/><path d="M1031 189l21 7-2 30-74 96-10-1z" fill="#62aeea"/></g><circle cx="68" cy="152" r="4" fill="#053a68"/></svg>
  <i class="w-[2px] h-[120px] mt-5 ml-[30px] mr-[28px] bg-[#2f84ad] shrink-0"></i>
  <svg class="w-[136px] h-[160px]" viewBox="0 0 136 160"><defs><linearGradient id="tr"><stop stop-color="#d5d8da"/><stop offset=".2" stop-color="#ededed"/><stop offset=".6" stop-color="#e2e2e2"/><stop offset="1" stop-color="#d0d4d6"/></linearGradient></defs><path d="M23 32q4 60 9 88 2 13 36 13t36-13q6-40 10-88-45 20-91 0z" fill="url(#tr)"/><path d="M32 112q36 16 72 0l-2 10q-6 10-34 10t-34-10z" fill="#f8f8f8" opacity=".8"/><ellipse cx="68.500" cy="31" rx="45.500" ry="10.500" fill="#b9ccd6" stroke="#e3ebef" stroke-width="1.500"/><path d="M29 24l12-2 7-6 8 4 8-2 5 8 6-10 9 5 9 2 5 6 6 3-4 10-24 4-20-1-20-4z" fill="#ececea"/><path d="M36 24l12-4 8 4-9 8z" fill="#8b8b88"/><path d="M76 22l7-3 11 11-9 9-9-4z" fill="#4d5a8d"/><path d="M80 32l11-4-4 11z" fill="#b7613a"/><path d="M42 33l9-5 10 11-11 2z" fill="#4b3b38"/><path d="M50 28l9-2 4 6-9 1z" fill="#43bfc1"/><path d="M62 30l5-3-2 14-5-1z" fill="#71a45a"/><path d="M95 25l8 4-5 9z" fill="#888"/><path d="M48 36l12 3 8-10-3 13-12 0zM72 42l-1-22 6 14z" fill="#fafafa"/><path d="M55 56q10 10 32-8-4 16-18 15-9 0-14-7z" fill="#f7f7f7" opacity=".6"/></svg>
</footer>
</body>
</html>
